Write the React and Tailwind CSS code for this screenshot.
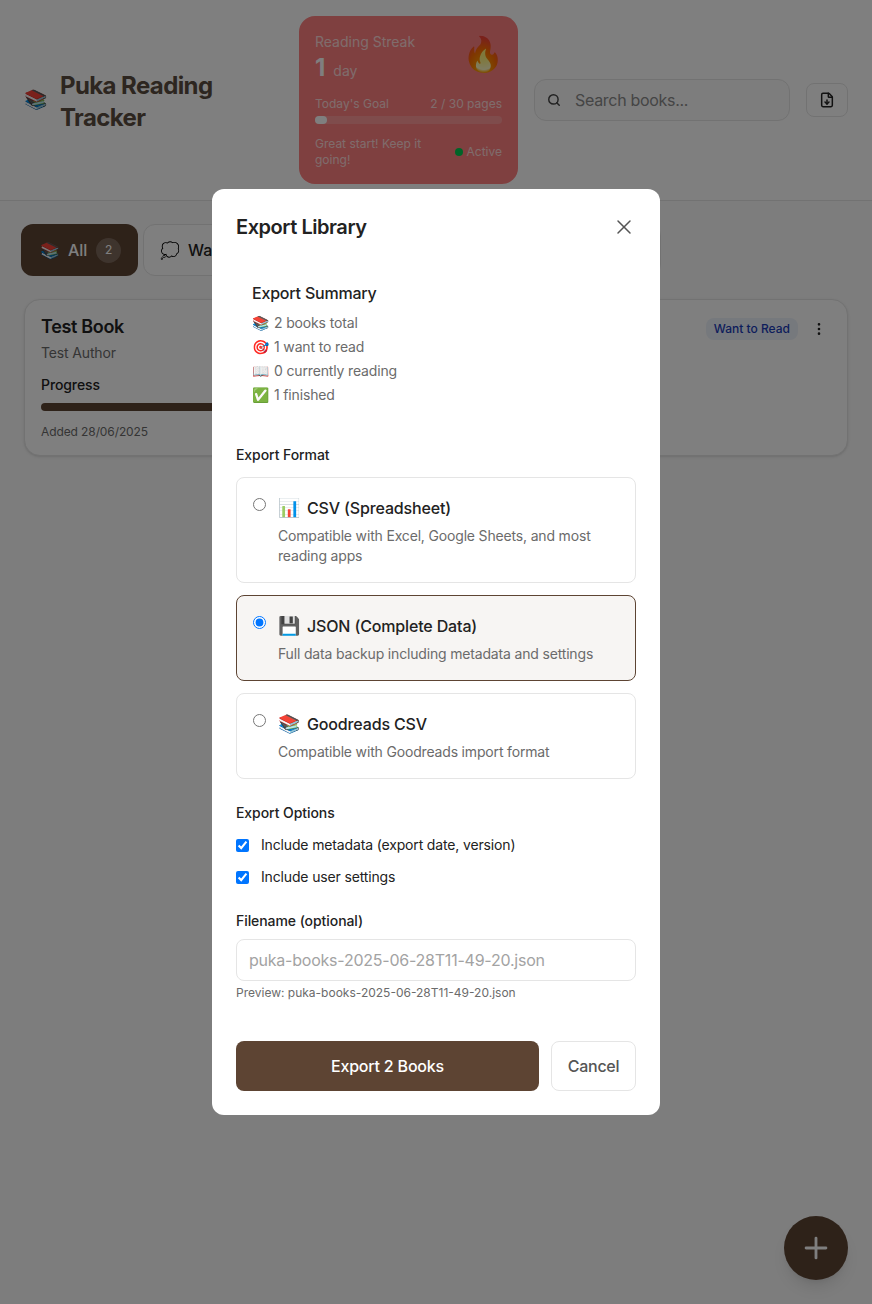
import { Search, FileDown, X, MoreVertical, Plus } from "lucide-react";

const SummaryRow = ({ icon, children }) => (
    <p className="text-sm leading-6 tracking-[-0.15px] text-[#6b6b6b]">
        <span className="mr-1 inline-block w-[18px]">{icon}</span>
        {children}
    </p>
);

const FormatOption = ({ icon, title, description, selected }) => (
    <label className={`flex items-start gap-3 rounded-lg border p-4 ${selected ? "border-[#5d4433] bg-[#f7f5f3]" : "border-[#e5e5e5] bg-white"}`}>
        <input type="radio" name="format" defaultChecked={selected} className="mt-1 h-[13px] w-[13px]" />
        <div className="flex-1">
            <div className="flex items-center gap-2 text-base font-[450] leading-6 tracking-[-0.15px] text-[#222]">
                <span className="w-[21px] text-[18px] leading-7 tracking-normal">{icon}</span>
                {title}
            </div>
            <p className="mt-1 text-sm leading-5 tracking-[-0.17px] text-[#6b6b6b]">{description}</p>
        </div>
    </label>
);

const App = () => {
    return (
        <div className="relative h-[1304px] w-[872px] overflow-hidden bg-[#fafafa] font-['Inter',sans-serif]">
            <header className="flex h-[201px] items-center border-b border-[#e5e5e5] bg-white px-6">
                <div className="flex w-[275px] items-center gap-[14px]">
                    <span className="w-[22px] text-[19px]">📚</span>
                    <h1 className="mt-[3px] w-[180px] text-2xl font-bold leading-8 tracking-[-0.6px] text-[#5a4c40]">Puka Reading Tracker</h1>
                </div>
                <div className="h-[168px] w-[219px] rounded-2xl bg-[#ff8080] p-4 text-white">
                    <div className="flex h-[52px] items-start justify-between">
                        <div>
                            <p className="text-sm leading-5 opacity-70">Reading Streak</p>
                            <p className="leading-8"><span className="text-2xl font-bold">1</span><span className="ml-2 text-sm opacity-70">day</span></p>
                        </div>
                        <span className="-mr-0.5 mt-0.5 text-[34px] leading-10">🔥</span>
                    </div>
                    <div className="mt-3 flex justify-between text-xs leading-4 opacity-70">
                        <span>Today's Goal</span>
                        <span>2 / 30 pages</span>
                    </div>
                    <div className="mt-1 h-2 rounded-full bg-white/20">
                        <div className="h-2 w-[12px] rounded-full bg-white" />
                    </div>
                    <div className="mt-3 flex items-center justify-between text-xs leading-4">
                        <span className="w-[120px] opacity-70">Great start! Keep it going!</span>
                        <span className="flex items-center gap-1"><span className="h-2 w-2 rounded-full bg-green-500" /><span className="opacity-70">Active</span></span>
                    </div>
                </div>
                <div className="ml-4 flex h-[42px] w-[256px] items-center gap-[14px] rounded-xl border border-[#e5e5e5] bg-[#fafafa] px-3 tracking-[-0.3px] text-[#8a8a8a]">
                    <Search size={14} strokeWidth={2.5} className="text-[#444]" />
                    <span>Search books...</span>
                </div>
                <button className="ml-4 flex h-[34px] w-[42px] items-center justify-center rounded-lg border border-[#e5e5e5] bg-white">
                    <FileDown size={16} strokeWidth={2.25} className="text-[#222]" />
                </button>
            </header>

            <main className="px-6">
                <div className="-ml-[3px] mt-[23px] flex gap-[5px]">
                    <div className="flex h-[52px] w-[117px] items-center gap-[9px] rounded-xl bg-[#5d4433] pl-[19px] text-white">
                        <span className="w-[19px]">📚</span>
                        <span className="font-[450] tracking-[-0.1px]">All</span>
                        <span className="flex h-[25px] w-[25px] items-center justify-center rounded-full bg-white/20 text-xs">2</span>
                    </div>
                    <div className="flex h-[52px] w-[518px] items-center gap-[9px] rounded-xl border border-[#e5e5e5] bg-white px-4 font-medium text-[#222]">
                        <span className="w-[19px]">💭</span>
                        <span>Want to Read</span>
                    </div>
                </div>
                <div className="mt-[23px] flex h-[157px] rounded-2xl border border-[#e5e5e5] bg-white p-4 shadow-sm">
                    <div className="w-[300px]">
                        <h2 className="text-lg font-semibold leading-[22px] tracking-[-0.33px] text-[#222]">Test Book</h2>
                        <p className="mt-[5px] text-sm leading-5 tracking-[-0.15px] text-[#6b6b6b]">Test Author</p>
                        <p className="mt-3 text-sm font-medium leading-5 tracking-[-0.1px] text-[#222]">Progress</p>
                        <div className="mt-2 h-2 rounded-full bg-[#5d4433]" />
                        <p className="mt-[13px] text-xs leading-4 tracking-[-0.1px] text-[#6b6b6b]">Added 28/06/2025</p>
                    </div>
                    <div className="ml-auto mt-[2px] flex h-[22px] items-center gap-[13px] pr-1">
                        <span className="rounded-lg bg-[#edf2fa] px-2 text-xs font-medium leading-[22px] text-blue-800">Want to Read</span>
                        <MoreVertical size={16} className="text-[#222]" />
                    </div>
                </div>
            </main>

            <button className="absolute bottom-6 right-6 flex h-16 w-16 items-center justify-center rounded-full bg-[#5d4433] text-white shadow-lg">
                <Plus size={34} />
            </button>

            {/* modal */}
            <div className="absolute inset-0 flex items-start justify-center bg-black/50 pt-[189px]">
                <div className="h-[926px] w-[448px] rounded-xl bg-white p-6">
                    <div className="flex h-[28px] items-center justify-between">
                        <h2 className="text-xl font-semibold tracking-[-0.45px] text-[#222]">Export Library</h2>
                        <X size={24} strokeWidth={1.5} className="text-[#555]" />
                    </div>
                    <div className="mt-[40px] px-4">
                        <h3 className="text-base font-[450] leading-6 tracking-[-0.2px] text-[#222]">Export Summary</h3>
                        <div className="mt-1.5">
                            <SummaryRow icon="📚">2 books total</SummaryRow>
                            <SummaryRow icon="🎯">1 want to read</SummaryRow>
                            <SummaryRow icon="📖">0 currently reading</SummaryRow>
                            <SummaryRow icon="✅">1 finished</SummaryRow>
                        </div>
                    </div>
                    <p className="mt-[38px] text-sm font-medium leading-5 tracking-[-0.07px] text-[#222]">Export Format</p>
                    <div className="mt-3 flex flex-col gap-3">
                        <FormatOption icon="📊" title="CSV (Spreadsheet)" description="Compatible with Excel, Google Sheets, and most reading apps" />
                        <FormatOption icon="💾" title="JSON (Complete Data)" description="Full data backup including metadata and settings" selected />
                        <FormatOption icon="📚" title="Goodreads CSV" description="Compatible with Goodreads import format" />
                    </div>
                    <p className="mt-6 text-sm font-medium leading-5 tracking-[-0.07px] text-[#222]">Export Options</p>
                    <label className="mt-3 flex items-center gap-3 text-sm leading-5 tracking-[-0.15px] text-[#222]">
                        <input type="checkbox" defaultChecked className="h-[13px] w-[13px]" />
                        Include metadata (export date, version)
                    </label>
                    <label className="mt-3 flex items-center gap-3 text-sm leading-5 tracking-[-0.15px] text-[#222]">
                        <input type="checkbox" defaultChecked className="h-[13px] w-[13px]" />
                        Include user settings
                    </label>
                    <p className="mt-6 text-sm font-medium leading-5 tracking-[-0.07px] text-[#222]">Filename (optional)</p>
                    <input placeholder="puka-books-2025-06-28T11-49-20.json" className="mt-2 h-[42px] w-full rounded-lg border border-[#e5e5e5] px-3 text-base tracking-[-0.23px] placeholder:text-[#a3a3a3]" />
                    <p className="mt-1 text-xs leading-4 text-[#6b6b6b]">Preview: puka-books-2025-06-28T11-49-20.json</p>
                    <div className="mt-10 flex gap-3">
                        <button className="h-[50px] flex-1 rounded-lg bg-[#5d4433] font-[450] tracking-[-0.2px] text-white">Export 2 Books</button>
                        <button className="h-[50px] w-[85px] rounded-lg border border-[#e5e5e5] font-[450] tracking-[-0.25px] text-[#555]">Cancel</button>
                    </div>
                </div>
            </div>
        </div>
    );
};

export default App;
